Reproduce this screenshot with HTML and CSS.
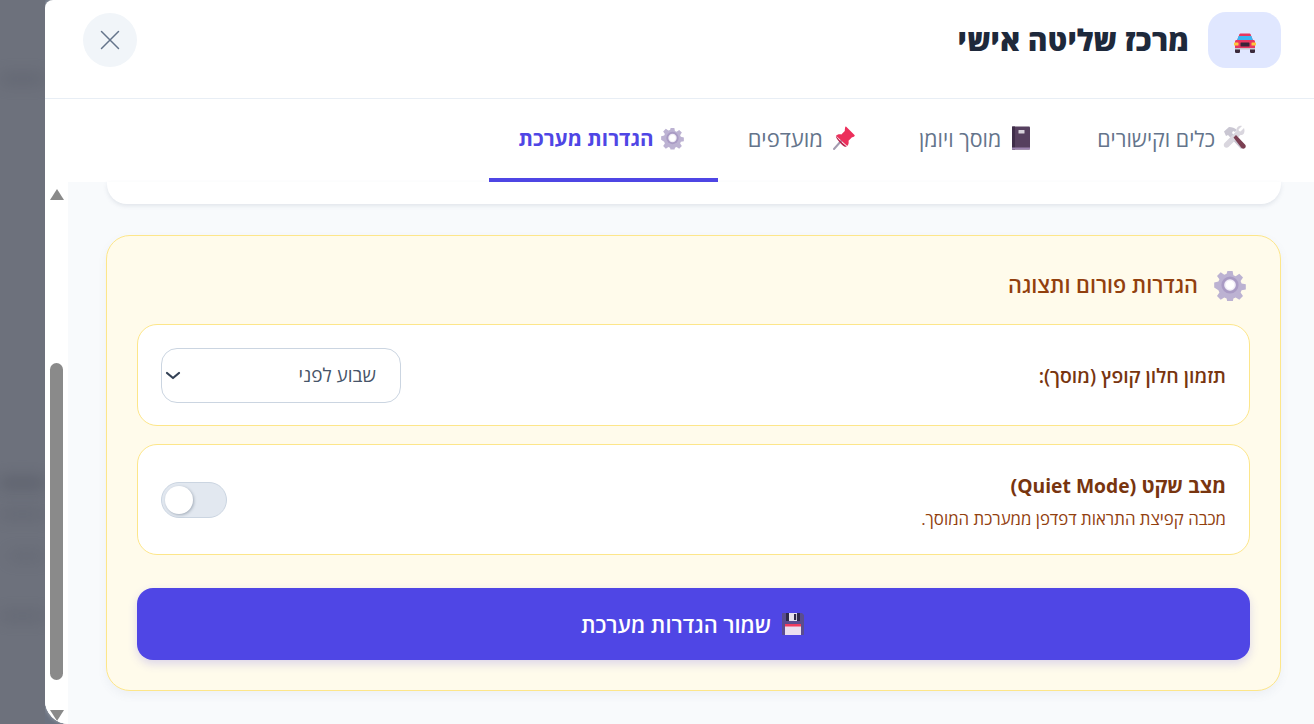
FILE: index.html
```html
<!DOCTYPE html>
<html lang="he" dir="rtl">
<head>
<meta charset="utf-8">
<title>מרכז שליטה אישי</title>
<link rel="stylesheet" href="styles.css">
</head>
<body>
<svg class="defs" width="0" height="0" aria-hidden="true">
  <symbol id="gear" viewBox="0 0 32 32">
    <path fill="#bcb2d2" d="M13.4 2h5.2l.8 4.2 2.3 1 3.6-2.4 3.7 3.7-2.4 3.6 1 2.3 4.2.8v5.2l-4.2.8-1 2.3 2.4 3.6-3.7 3.700-3.600-2.400-2.300 1-.8 4.200h-5.200l-.8-4.200-2.300-1-3.600 2.400-3.700-3.700 2.400-3.600-1-2.300L.2 18.600v-5.200l4.200-.8 1-2.300L3 7l3.700-3.700 3.600 2.400 2.300-1z"/>
    <circle cx="16" cy="16" r="8.600" fill="#a99bc4"/>
    <circle cx="16" cy="16" r="5.800" fill="#f2eff7"/>
    <circle cx="16" cy="16" r="4.200" fill="#fff"/>
  </symbol>
</svg>

<div class="page">
  <div class="backdrop">
    <span class="blur blur-a"></span>
    <span class="blur blur-b"></span>
    <span class="blur blur-c"></span>
    <span class="blur blur-d"></span>
    <span class="blur blur-e"></span>
  </div>

  <main class="modal">
    <header class="modal-head">
      <div class="brand">
        <div class="brand-icon">
          <svg width="24" height="20" viewBox="0 0 24 20">
            <rect x="2" y="14" width="5" height="6" rx="1.200" fill="#3b2a3c"/>
            <rect x="17" y="14" width="5" height="6" rx="1.200" fill="#3b2a3c"/>
            <path fill="#e8365f" d="M6 2.500C6 1 7 .5 8 .5h8c1 0 2 .5 2 2l2 5H4z"/>
            <path fill="#3bb5f2" d="M5.600 3h12.800L20 7.500H4z"/>
            <path fill="#e8365f" d="M2 8.400C2 7.600 2.800 7 3.600 7h16.800c.8 0 1.600.6 1.600 1.400V15c0 .6-.5 1-1 1H3c-.5 0-1-.4-1-1z"/>
            <rect x="1" y="9.500" width="4.500" height="3" rx=".6" fill="#ffc83d"/>
            <rect x="18.500" y="9.500" width="4.500" height="3" rx=".6" fill="#ffc83d"/>
            <rect x="7.500" y="9.500" width="9" height="4" rx=".6" fill="#3a2438"/>
            <rect x="2" y="15" width="20" height="1.500" fill="#c9c6cf"/>
          </svg>
        </div>
        <h1 class="title">מרכז שליטה אישי</h1>
      </div>
      <button class="close" type="button" aria-label="סגור">
        <svg width="20" height="20" viewBox="0 0 20 20" fill="none" stroke="#64748b" stroke-width="1.500" stroke-linecap="round"><path d="M1.500 1.500l17 17M18.500 1.500l-17 17"/></svg>
      </button>
    </header>

    <nav class="tabs">
      <a class="tab">
        <svg class="tab-icon" width="26" height="26" viewBox="0 0 26 26">
          <path fill="#c9c6d2" d="M3 6.500 8 2c3 0 6 1 8 3l-2 2-2-1-1 2 12 13-3 3L7 10 5 11z"/>
          <path fill="#d9d6de" d="M23 3l-3.500 3.500-1.500-.5-.5-1.500L21 1c-3-.8-6 1.500-5.500 5l-12 12c-1 1-1 3 0 4s3 1 4 0l12-12c3 .5 5-2.500 3.500-7z"/>
          <path fill="#7b3f52" d="M12.500 12.500l2.500-2.500 9 9.500c1 1 1 2.500 0 3.500s-2.500 1-3.500 0z"/>
        </svg>
        <span>כלים וקישורים</span>
      </a>
      <a class="tab">
        <svg class="tab-icon" width="26" height="26" viewBox="0 0 26 26">
          <rect x="5" y="1.500" width="18" height="23" rx="1" fill="#56405f"/>
          <rect x="5" y="1.500" width="3" height="23" fill="#3f2d49"/>
          <rect x="5" y="22.500" width="18" height="2" fill="#9c83b0"/>
          <rect x="11.500" y="5" width="6" height="3.500" rx=".5" fill="#d8d3dc"/>
        </svg>
        <span>מוסך ויומן</span>
      </a>
      <a class="tab tab-wide">
        <svg class="tab-icon" width="26" height="26" viewBox="0 0 26 26">
          <path d="M5 24l8-9" stroke="#a49cb0" stroke-width="2" stroke-linecap="round"/>
          <path fill="#ec2f5b" d="M17 1.500l8.500 8.500c.7.700-.2 2.300-2.500 2.200l-3.500 3.500c.5 2.500-.2 4.300-1.300 5.300L7 10.800c1-1.100 2.800-1.800 5.300-1.300l3.500-3.500c-.1-2.300 .5-5.200 1.200-4.500z"/>
          <path fill="#b81f4a" d="M7 10.800c2 3 5 6 10.700 10.700-1 .8-3 0-5-2s-6.500-7-5.700-8.700z"/>
        </svg>
        <span>מועדפים</span>
      </a>
      <a class="tab is-active">
        <svg class="tab-icon" width="26" height="26"><use href="#gear" x="1" y="1.500" width="23" height="23"/></svg>
        <span>הגדרות מערכת</span>
      </a>
    </nav>

    <div class="scroller">
      <div class="scrollbar">
        <span class="arrow arrow-up"></span>
        <span class="track"><span class="thumb"></span></span>
        <span class="arrow arrow-down"></span>
      </div>
      <div class="content">
        <div class="card-tail"></div>

        <section class="panel">
          <h2 class="panel-title">
            <svg width="32" height="32"><use href="#gear"/></svg>
            <span>הגדרות פורום ותצוגה</span>
          </h2>

          <div class="row row-select">
            <label class="row-label" for="popup">תזמון חלון קופץ (מוסך):</label>
            <span class="select-wrap">
              <select class="select" id="popup">
                <option>שבוע לפני</option>
              </select>
              <svg class="chevron" width="16" height="9" viewBox="0 0 16 9" fill="none" stroke="#334155" stroke-width="2.200" stroke-linecap="round" stroke-linejoin="round"><path d="M2 2l6 5 6-5"/></svg>
            </span>
          </div>

          <div class="row row-toggle">
            <div class="row-text">
              <div class="row-head">מצב שקט (<span class="latin">Quiet Mode</span>)</div>
              <div class="row-note">מכבה קפיצת התראות דפדפן ממערכת המוסך.</div>
            </div>
            <span class="switch"><span class="knob"></span></span>
          </div>

          <button class="save" type="button">
            <svg width="26" height="26" viewBox="0 0 26 26">
              <path fill="#5a4d8f" d="M2 3c0-.6.4-1 1-1h19l2 2v19c0 .6-.4 1-1 1H3c-.6 0-1-.4-1-1z"/>
              <rect x="6" y="2" width="14" height="8" fill="#2f2a4a"/>
              <rect x="9" y="2" width="8" height="8" fill="#e5e1ee"/>
              <rect x="14" y="3" width="2.200" height="6" fill="#2f2a4a"/>
              <rect x="5" y="13" width="16" height="11" fill="#eadff0"/>
              <rect x="5" y="13" width="16" height="2.500" fill="#ef3b5e"/>
            </svg>
            <span>שמור הגדרות מערכת</span>
          </button>
        </section>
      </div>
    </div>
  </main>
</div>
</body>
</html>
```
FILE: styles.css
```css
* { box-sizing: border-box; }
html, body { margin: 0; height: 100%; overflow: hidden; }
body {
  font-family: "Open Sans", "Noto Sans", "Liberation Sans", sans-serif;
  background: #6b7280;
}
.defs { position: absolute; }

.page {
  display: flex;
  flex-direction: row-reverse;
  height: 724px;
  width: 1314px;
}

.backdrop {
  position: relative;
  width: 45px;
  flex: none;
  overflow: hidden;
  background: #6d717c;
}
.blur {
  position: absolute;
  left: 0;
  background: #474b58;
  filter: blur(8px);
  opacity: .5;
}
.blur-a { top: 74px; width: 45px; height: 10px; opacity: .3; }
.blur-b { top: 478px; width: 45px; height: 10px; }
.blur-c { top: 510px; width: 45px; height: 8px; opacity: .3; }
.blur-d { top: 552px; left: 8px; width: 37px; height: 8px; opacity: .25; }
.blur-e { top: 612px; width: 45px; height: 8px; opacity: .3; }

.modal {
  flex: 1;
  min-width: 0;
  height: 724px;
  display: flex;
  flex-direction: column;
  background: #fff;
  border-radius: 8px 0 0 24px;
  overflow: hidden;
  box-shadow: 0 0 4px rgba(255,255,255,.4);
}

.modal-head {
  height: 99px;
  flex: none;
  display: flex;
  align-items: center;
  justify-content: space-between;
  padding: 0 33px 18px 38px;
  border-bottom: 1px solid #e8eef5;
}
.brand { display: flex; align-items: center; gap: 19px; }
.brand-icon {
  width: 73px;
  height: 56px;
  border-radius: 18px;
  background: #e0e7ff;
  display: flex;
  align-items: center;
  justify-content: center;
  padding-top: 6px;
}
.title {
  margin: 0;
  font-size: 30px;
  font-weight: 800;
  color: #1e293b;
  line-height: 1;
}
.close {
  width: 54px;
  height: 54px;
  border: 0;
  border-radius: 50%;
  background: #f1f5f9;
  display: flex;
  align-items: center;
  justify-content: center;
  padding: 0;
}

.tabs {
  height: 83px;
  flex: none;
  display: flex;
  padding: 0 33px;
  background: #fff;
}
.tab {
  display: flex;
  align-items: center;
  gap: 6px;
  padding: 0 34px 1px 30px;
  font-size: 21.400px;
  font-weight: 500;
  color: #64748b;
  border-bottom: 4px solid transparent;
}
.tab-wide { font-size: 22px; }
.tab-icon { flex: none; }
.tab.is-active {
  color: #4f46e5;
  font-size: 20.700px;
  font-weight: 700;
  padding-right: 32px;
  border-bottom-color: #4f46e5;
}

.scroller {
  flex: 1;
  min-height: 0;
  display: flex;
  flex-direction: row-reverse;
  background: #f8fafc;
}
.scrollbar {
  width: 23px;
  flex: none;
  background: #fff;
  display: flex;
  flex-direction: column;
  align-items: center;
  padding: 7px 5px 3px;
}
.arrow { flex: none; width: 0; height: 0; border-left: 7px solid transparent; border-right: 7px solid transparent; }
.arrow-up { border-bottom: 11px solid #8a8a8a; }
.arrow-down { border-top: 11px solid #8a8a8a; }
.track { flex: 1; width: 13px; padding-top: 163px; padding-bottom: 30px; display: flex; }
.thumb { flex: 1; background: #8a8a8a; border-radius: 7px; }

.content {
  flex: 1;
  min-width: 0;
  padding: 0 33px 0 38px;
}
.card-tail {
  height: 22px;
  background: #fff;
  border-radius: 0 0 20px 20px;
  box-shadow: 0 2px 4px rgba(100,116,139,.15);
  margin: 0 0 31px 1px;
}

.panel {
  height: 456px;
  background: #fffbeb;
  border: 1px solid #fde68a;
  border-radius: 24px;
  padding: 30px;
  box-shadow: 0 4px 10px rgba(100,116,139,.07);
}
.panel-title {
  margin: 0 0 21px;
  height: 37px;
  display: flex;
  align-items: center;
  gap: 16px;
  padding-right: 4px;
  font-size: 21.600px;
  font-weight: 600;
  color: #92400e;
}

.row {
  background: #fff;
  border: 1px solid #fde68a;
  border-radius: 20px;
  padding: 0 23px;
  display: flex;
  align-items: center;
  justify-content: space-between;
}
.row-select { height: 102px; margin-bottom: 18px; }
.row-toggle { height: 111px; margin-bottom: 33px; }
.row-label { font-size: 19.400px; font-weight: 600; color: #78350f; }
.select-wrap { position: relative; display: block; }
.select {
  display: block;
  width: 240px;
  height: 55px;
  border: 1px solid #cbd5e1;
  border-radius: 16px;
  background: #fff;
  font: inherit;
  font-size: 19px;
  color: #475569;
  padding: 0 24px;
  appearance: none;
  -webkit-appearance: none;
}
.chevron { position: absolute; left: 4px; top: 23px; }
.row-text { padding-top: 2px; }
.row-head { font-size: 20px; font-weight: 700; color: #78350f; line-height: 28px; }
.latin { font-size: 19.300px; }
.row-note { font-size: 16.800px; color: #92400e; line-height: 22px; margin-top: 8px; }
.switch {
  width: 66px;
  height: 36px;
  border-radius: 18px;
  background: #e2e8f0;
  border: 1px solid #cbd5e1;
  display: flex;
  align-items: center;
  justify-content: flex-end;
  padding: 0 3px;
}
.knob {
  width: 28px;
  height: 28px;
  background: #fff;
  border-radius: 50%;
  box-shadow: 1px 1px 3px rgba(71,85,105,.4);
}

.save {
  width: 100%;
  height: 72px;
  border: 0;
  border-radius: 16px;
  background: #4f46e5;
  color: #fff;
  font: inherit;
  font-size: 21.800px;
  font-weight: 600;
  display: flex;
  align-items: center;
  justify-content: center;
  gap: 9px;
  box-shadow: 0 4px 10px rgba(79,70,229,.2);
}
```
